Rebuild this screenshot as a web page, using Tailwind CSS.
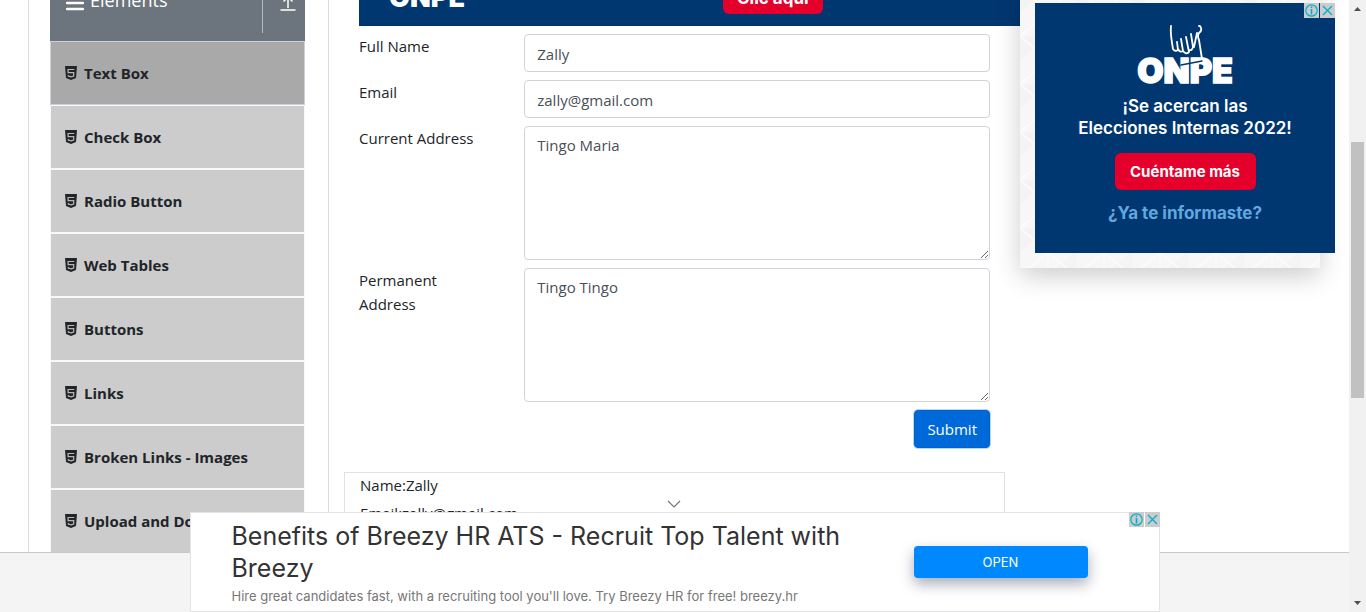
<!DOCTYPE html>
<html lang="en">
<head>
<meta charset="utf-8">
<title>Text Box</title>
<script src="https://cdn.jsdelivr.net/npm/@tailwindcss/browser@4"></script>
</head>
<body class="relative flex h-screen overflow-hidden bg-white font-['Open_Sans','Noto_Sans',sans-serif] text-[15px] leading-6 text-[#212529]">
<svg class="hidden" aria-hidden="true">
  <symbol id="html5" viewBox="0 0 12 14"><path fill="currentColor" d="M0 0h12l-1 12-5 2-5-2z"/><path fill="none" stroke="#b8b8b8" stroke-width="1.200" d="M9.300 3.500H3.100v3.200h5.600v3.300l-2.700.9-2.700-.9V8.900"/></symbol>
  <symbol id="info" viewBox="0 0 15 15"><rect width="15" height="15" fill="#ccc"/><circle cx="7.500" cy="7.500" r="5.700" fill="none" stroke="#00aecd" stroke-width="1.200"/><path d="M7.500 3.500v1.500M7.500 6v5.500" stroke="#00aecd" stroke-width="1.600"/></symbol>
  <symbol id="close" viewBox="0 0 15 15"><rect width="15" height="15" fill="#ccc"/><path d="M3 3l9 9M12 3l-9 9" stroke="#00aecd" stroke-width="1.300"/></symbol>
</svg>

<div class="flex min-w-0 flex-1 flex-col">
  <main class="flex min-h-0 flex-1 items-stretch overflow-hidden border-b border-[#c8c8c8] pl-7">
    <nav class="w-[301px] shrink-0 border-x border-[#dcdcdc] pr-[23px] pl-[21px]" aria-label="Elements">
      <div class="-mt-[42px] flex h-[83px] items-center bg-[#6c757d] pl-4 text-white">
        <svg class="mt-1.5 mr-1.5 size-[18px]" viewBox="0 0 18 18"><path d="M1 3h16M1 9h16M1 15h16" stroke="#fff" stroke-width="2.500" stroke-linecap="round"/></svg>
        <span class="flex-1 text-[18px]">Elements</span>
        <span class="flex h-[66px] w-[43px] items-center justify-center border-l border-[#b5babe] pl-2">
          <svg class="mt-1.5 size-4" viewBox="0 0 16 16" fill="none" stroke="#fff" stroke-width="1.500"><path d="M8 13V2M3.500 6.500L8 2l4.500 4.500M0.500 15h15"/></svg>
        </span>
      </div>
      <ul class="font-bold">
        <li><a href="#" class="flex h-16 items-center gap-[7px] border border-[#cdd1dc] bg-[#a9a9a9] pl-3.5"><svg class="h-3.5 w-3"><use href="#html5"/></svg>Text Box</a></li>
        <li><a href="#" class="flex h-16 items-center gap-[7px] border border-[#f8f8fa] bg-[#ccc] pl-3.5"><svg class="h-3.5 w-3"><use href="#html5"/></svg>Check Box</a></li>
        <li><a href="#" class="flex h-16 items-center gap-[7px] border border-[#f8f8fa] bg-[#ccc] pl-3.5"><svg class="h-3.5 w-3"><use href="#html5"/></svg>Radio Button</a></li>
        <li><a href="#" class="flex h-16 items-center gap-[7px] border border-[#f8f8fa] bg-[#ccc] pl-3.5"><svg class="h-3.5 w-3"><use href="#html5"/></svg>Web Tables</a></li>
        <li><a href="#" class="flex h-16 items-center gap-[7px] border border-[#f8f8fa] bg-[#ccc] pl-3.5"><svg class="h-3.5 w-3"><use href="#html5"/></svg>Buttons</a></li>
        <li><a href="#" class="flex h-16 items-center gap-[7px] border border-[#f8f8fa] bg-[#ccc] pl-3.5"><svg class="h-3.5 w-3"><use href="#html5"/></svg>Links</a></li>
        <li><a href="#" class="flex h-16 items-center gap-[7px] border border-[#f8f8fa] bg-[#ccc] pl-3.5"><svg class="h-3.5 w-3"><use href="#html5"/></svg>Broken Links - Images</a></li>
        <li><a href="#" class="flex h-16 items-center gap-[7px] border border-[#f8f8fa] bg-[#ccc] pl-3.5"><svg class="h-3.5 w-3"><use href="#html5"/></svg>Upload and Download</a></li>
      </ul>
    </nav>

    <section class="min-w-0 flex-1 px-[15px]">
      <div class="-mt-16 mr-[-15px] ml-[15px] flex h-[90px] items-end bg-[#003770] pb-3 font-['Inter',sans-serif] text-white">
        <span class="w-[364px] pl-[30px] text-[27px] leading-8 font-black">ONPE</span>
        <a href="#" class="rounded-md bg-[#e4002b] px-3.5 pt-4 pb-1 text-[17px] leading-6 font-bold">Clic aquí</a>
      </div>
      <form class="mt-2 flex flex-col gap-2">
        <div class="grid grid-cols-[1fr_3fr]">
          <label for="name" class="px-[15px]">Full Name</label>
          <div class="px-[15px]"><input id="name" type="text" value="Zally" class="block h-[38px] w-full rounded border border-[#ced4da] px-3 pt-1 pb-0.5 text-[#495057]"></div>
        </div>
        <div class="grid grid-cols-[1fr_3fr]">
          <label for="email" class="px-[15px]">Email</label>
          <div class="px-[15px]"><input id="email" type="email" value="zally@gmail.com" class="block h-[38px] w-full rounded border border-[#ced4da] px-3 pt-1 pb-0.5 text-[#495057]"></div>
        </div>
        <div class="grid grid-cols-[1fr_3fr]">
          <label for="current" class="px-[15px]">Current Address</label>
          <div class="px-[15px]"><textarea id="current" class="block h-[134px] w-full resize rounded border border-[#ced4da] px-3 py-1.5 text-[#495057]">Tingo Maria</textarea></div>
        </div>
        <div class="grid grid-cols-[1fr_3fr]">
          <label for="permanent" class="px-[15px]">Permanent Address</label>
          <div class="px-[15px]"><textarea id="permanent" class="block h-[134px] w-full resize rounded border border-[#ced4da] px-3 py-1.5 text-[#495057]">Tingo Tingo</textarea></div>
        </div>
        <div class="flex justify-end pr-[15px]">
          <button type="button" class="h-[38px] rounded border border-[#0062cc] bg-[#0069d9] px-3 text-white ring-1 ring-[#b3d7ff]">Submit</button>
        </div>
      </form>
      <div class="mt-6 h-36 border border-[#dee2e6] px-[15px]">
        <p class="mb-1">Name:Zally</p>
        <p>Email:zally@gmail.com</p>
      </div>
    </section>

    <aside class="relative w-[329px] shrink-0" aria-label="Advertisement">
      <div class="-mt-3 h-[280px] w-[300px] bg-[#f7f7f7] pt-[15px] pl-[15px] shadow-[0_8px_24px_rgba(0,0,0,0.2)]">
        <div class="relative">
          <svg class="absolute -top-[15px] -left-[15px] h-[280px] w-[300px]" aria-hidden="true">
            <defs><pattern id="hex" width="56" height="48" patternUnits="userSpaceOnUse"><path d="M0 0h28L0 24z" fill="#f3f3f3"/><path d="M28 48l28-24v24z" fill="#f4f4f4"/><path d="M0 0l56 48M56 0L0 48M28 0v48" stroke="#fcfcfc" stroke-width="1.500"/></pattern></defs>
            <rect width="300" height="280" fill="url(#hex)"/>
          </svg>
          <div class="relative flex h-[250px] w-[300px] flex-col items-center bg-[#003770] pt-5 font-['Inter',sans-serif] text-[17px] leading-[22px] font-semibold text-white">
            <div class="relative flex h-16 items-end">
              <span class="text-[34px] leading-8 font-black [-webkit-text-stroke:1.5px_white]">ONPE</span>
              <svg class="absolute top-0 left-[30px] h-[54px] w-9" viewBox="0 0 36 54" fill="none" stroke="#fff" stroke-width="1.800" stroke-linecap="round" stroke-linejoin="round"><path d="M4 3c-1 8 1 16 2 23q2 3 5 1l-1-8M11 26q2 4 5 2l-2-12M16 28q3 4 6 1l-3-15M22 27q3 1 4-3l-2-13M27 24l3-14"/><path d="M32 3h1q3 4-1 7-2 3 0 7l3 19"/><path d="M14 42l21-4" stroke="#003770" stroke-width="1.500"/></svg>
            </div>
            <p class="mt-2">¡Se acercan las</p>
            <p>Elecciones Internas 2022!</p>
            <a href="#" class="mt-3.5 flex h-[37px] w-[141px] items-center justify-center rounded-md bg-[#e4002b] text-[15px] font-bold">Cuéntame más</a>
            <p class="mt-3 font-bold text-[#62a8e0]">¿Ya te informaste?</p>
            <div class="absolute top-0 right-0 flex gap-px">
              <button type="button" aria-label="Ad information" class="size-[15px]"><svg class="size-[15px]"><use href="#info"/></svg></button>
              <button type="button" aria-label="Close ad" class="size-[15px]"><svg class="size-[15px]"><use href="#close"/></svg></button>
            </div>
          </div>
        </div>
      </div>
    </aside>
  </main>
  <footer class="h-[59px] shrink-0 bg-[#f4f4f4]"></footer>
</div>

<div class="flex w-[17px] shrink-0 flex-col items-center bg-[#f1f1f1]" aria-hidden="true">
  <svg class="h-[142px] w-[17px]" viewBox="0 0 17 142"><path d="M5 11l3.500-4 3.500 4z" fill="#505050"/></svg>
  <div class="h-64 w-[13px] bg-[#c1c1c1]"></div>
  <svg class="mt-auto h-[17px] w-[17px]" viewBox="0 0 17 17"><path d="M5 6l3.500 4 3.500-4z" fill="#505050"/></svg>
</div>

<div class="absolute inset-x-0 bottom-0 flex flex-col items-center pr-[17px]">
  <button type="button" aria-label="Collapse ad" class="mr-0.5 mb-1"><svg class="h-2 w-[14px]" viewBox="0 0 14 8" fill="none" stroke="#777" stroke-width="1.200"><path d="M1 1l6 6 6-6"/></svg></button>
  <div class="relative flex h-[100px] w-[970px] items-center border border-[#e4e4e4] bg-white pr-[71px] pl-[41px] font-['Inter',sans-serif]">
    <div class="w-[682px] pt-1">
      <h2 class="w-[640px] text-[25px] leading-8 text-[#333]">Benefits of Breezy HR ATS - Recruit Top Talent with Breezy</h2>
      <p class="text-[13px] leading-6 text-[#777]">Hire great candidates fast, with a recruiting tool you'll love. Try Breezy HR for free! breezy.hr</p>
    </div>
    <a href="#" class="flex h-8 flex-1 items-center justify-center rounded bg-[#0088ff] text-[13px] text-white shadow-[0_6px_14px_rgba(40,50,80,0.4)]">OPEN</a>
    <div class="absolute -top-px -right-px flex gap-px">
      <button type="button" aria-label="Ad information" class="size-[15px]"><svg class="size-[15px]"><use href="#info"/></svg></button>
      <button type="button" aria-label="Close ad" class="size-[15px]"><svg class="size-[15px]"><use href="#close"/></svg></button>
    </div>
  </div>
</div>
</body>
</html>
